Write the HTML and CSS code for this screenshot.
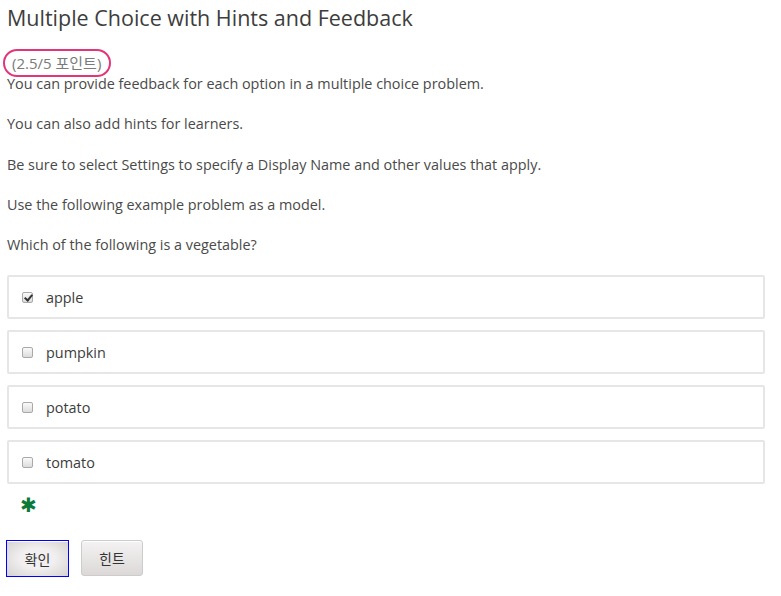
FILE: index.html
```html
<!DOCTYPE html>
<html lang="ko">
<head>
<meta charset="utf-8">
<link rel="stylesheet" href="styles.css">
</head>
<body>
<div class="problem">
  <h2 class="title">Multiple Choice with Hints and Feedback</h2>
  <div class="points"><span class="pill">(2.5/5 포인트)</span></div>
  <p class="txt first">You can provide feedback for each option in a multiple choice problem.</p>
  <p class="txt">You can also add hints for learners.</p>
  <p class="txt">Be sure to select Settings to specify a Display Name and other values that apply.</p>
  <p class="txt">Use the following example problem as a model.</p>
  <p class="txt">Which of the following is a vegetable?</p>
  <div class="choices">
    <label class="choice"><input type="checkbox" checked><span>apple</span></label>
    <label class="choice"><input type="checkbox"><span>pumpkin</span></label>
    <label class="choice"><input type="checkbox"><span>potato</span></label>
    <label class="choice"><input type="checkbox"><span>tomato</span></label>
  </div>
  <div class="status"><span class="star">✱</span></div>
  <div class="actions">
    <button class="btn focus">확인</button>
    <button class="btn">힌트</button>
  </div>
</div>
</body>
</html>
```
FILE: styles.css
```css
html, body { margin: 0; padding: 0; background: #fff; }
body {
  font-family: "Open Sans", "Noto Sans CJK KR", sans-serif;
  color: #4a4a4a;
}
.problem { padding: 0 16px 0 7px; }
.title {
  margin: 0;
  padding-top: 4px;
  font-size: 21.5px;
  font-weight: 400;
  line-height: 28px;
  color: #3d3d3d;
}
.points { margin-top: 17px; height: 28px; }
.pill {
  display: inline-block;
  margin-left: -4px;
  border: 2px solid #e2357a;
  border-radius: 14px;
  padding: 0 8px 0 7px;
  height: 24px;
  line-height: 24px;
  font-size: 15px;
  color: #7a7a7a;
}
.txt {
  margin: 0;
  font-size: 14.4px;
  line-height: 20px;
  margin-top: 20.3px;
}
.txt.first { margin-top: -3px; }
.choices { margin-top: 20px; display: flex; flex-direction: column; gap: 11px; }
.choice {
  display: flex;
  align-items: center;
  height: 40px;
  border: 2px solid #e6e6e6;
  border-radius: 2px;
  font-size: 14.4px;
  color: #3c3c3c;
}
.choice input {
  appearance: none;
  -webkit-appearance: none;
  margin: 0 0 0 13px;
  width: 11px;
  height: 11px;
  border: 1px solid #a9a9a9;
  border-radius: 2px;
  background: linear-gradient(#fafafa, #dcdcdc);
  position: relative;
}
.choice input:checked::after {
  content: "";
  position: absolute;
  left: 3px;
  top: 0px;
  width: 3px;
  height: 6px;
  border: solid #333;
  border-width: 0 2px 2px 0;
  transform: rotate(40deg);
}
.choice span { margin-left: 13px; }
.status { margin-top: 8px; height: 26px; padding-left: 13px; }
.star { color: #0a7a3a; font-size: 20px; line-height: 26px; }
.actions { margin-top: 22px; display: flex; gap: 12px; }
.btn {
  font-family: "Noto Sans CJK KR", sans-serif;
  font-size: 14px;
  color: #333;
  height: 36px;
  width: 62px;
  border: 1px solid #ccc;
  border-radius: 3px;
  background: linear-gradient(#f4f2f2, #dcd8d8);
  box-shadow: inset 0 1px 0 #fff;
}
.btn.focus {
  margin-left: -1px;
  width: 63px;
  height: 37px;
  border: 1px solid #0000ff;
  border-radius: 0;
  background: radial-gradient(ellipse at center, #f1efef 40%, #d6d2d2 100%);
}
```
